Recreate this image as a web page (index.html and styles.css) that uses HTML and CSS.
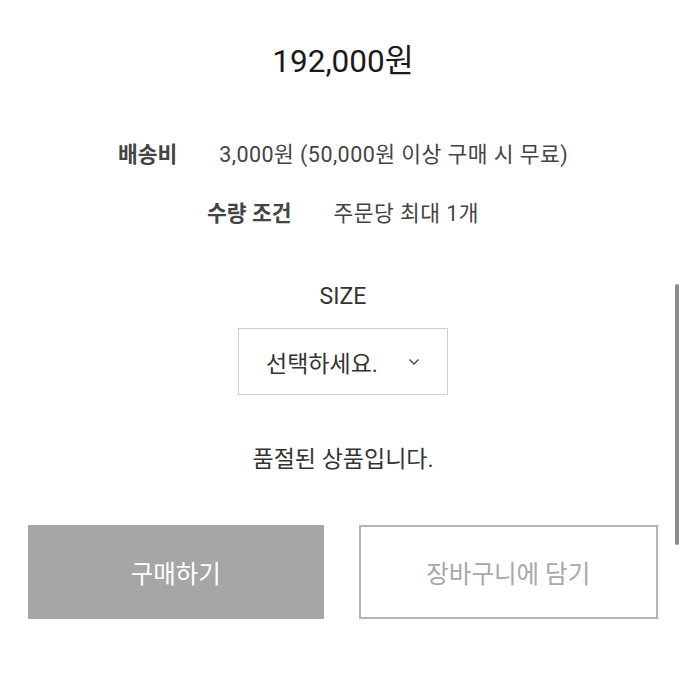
FILE: index.html
```html
<!DOCTYPE html>
<html lang="ko">
<head>
    <meta charset="UTF-8">
    <meta name="viewport" content="width=device-width, initial-scale=1.0">
    <title>상품 정보</title>
    <link rel="stylesheet" href="styles.css">
</head>
<body>
    <div class="product">
        <div class="price">192,000원</div>

        <div class="info">
            <div class="info-row">
                <span class="label">배송비</span>
                <span class="value">3,000원 (50,000원 이상 구매 시 무료)</span>
            </div>
            <div class="info-row">
                <span class="label">수량 조건</span>
                <span class="value">주문당 최대 1개</span>
            </div>
        </div>

        <div class="option">
            <div class="option-title">SIZE</div>
            <div class="select">
                <span>선택하세요.</span>
                <svg class="chevron" width="12" height="8" viewBox="0 0 12 8">
                    <path d="M1.5 1.5 L6 6 L10.5 1.5" fill="none" stroke="#444" stroke-width="1.4"/>
                </svg>
            </div>
        </div>

        <div class="soldout">품절된 상품입니다.</div>

        <div class="actions">
            <button class="btn buy">구매하기</button>
            <button class="btn cart">장바구니에 담기</button>
        </div>
    </div>

    <!-- scroll indicator -->
    <div class="scrollbar"></div>
</body>
</html>
```

FILE: styles.css
```css
body {
    margin: 0;
    padding: 0;
    background-color: #fff;
    font-family: Roboto, "Noto Sans CJK KR", sans-serif;
    color: #333;
}

.product {
    display: flex;
    flex-direction: column;
    align-items: center;
    padding: 42px 28px 0;
}

.price {
    font-size: 31.5px;
    line-height: 40px;
    color: #1a1a1a;
}

.info {
    display: flex;
    flex-direction: column;
    align-items: center;
    gap: 29px;
    margin-top: 58px;
}

.info-row {
    display: flex;
    align-items: center;
    gap: 42px;
    font-size: 21.5px;
    line-height: 30px;
}

.info-row .label {
    font-weight: bold;
    color: #444;
}

.info-row .value {
    color: #444;
    letter-spacing: 0.45px;
}

.option {
    display: flex;
    flex-direction: column;
    align-items: center;
    margin-top: 53px;
}

.option-title {
    font-size: 23px;
    line-height: 30px;
    color: #333;
}

.select {
    box-sizing: border-box;
    width: 210px;
    height: 67px;
    margin-top: 16px;
    border: 1px solid #cfcfcf;
    display: flex;
    align-items: center;
    justify-content: space-between;
    padding: 0 27px 0 27px;
    font-size: 23px;
    color: #333;
}

.chevron {
    display: block;
}

.soldout {
    margin-top: 50px;
    font-size: 23px;
    line-height: 30px;
    color: #333;
}

.actions {
    display: flex;
    gap: 35px;
    width: 100%;
    margin-top: 50px;
}

.btn {
    flex: 1;
    height: 94px;
    font-family: Roboto, "Noto Sans CJK KR", sans-serif;
    font-size: 24.5px;
    border-radius: 0;
    cursor: pointer;
}

.btn.buy {
    background-color: #a6a6a6;
    border: none;
    color: #fff;
}

.btn.cart {
    background-color: #fff;
    border: 2px solid #b4b4b4;
    color: #a8a8a8;
}

.scrollbar {
    position: fixed;
    top: 284px;
    right: 7px;
    width: 4px;
    height: 261px;
    border-radius: 2px;
    background-color: #8a8a8a;
}
```
